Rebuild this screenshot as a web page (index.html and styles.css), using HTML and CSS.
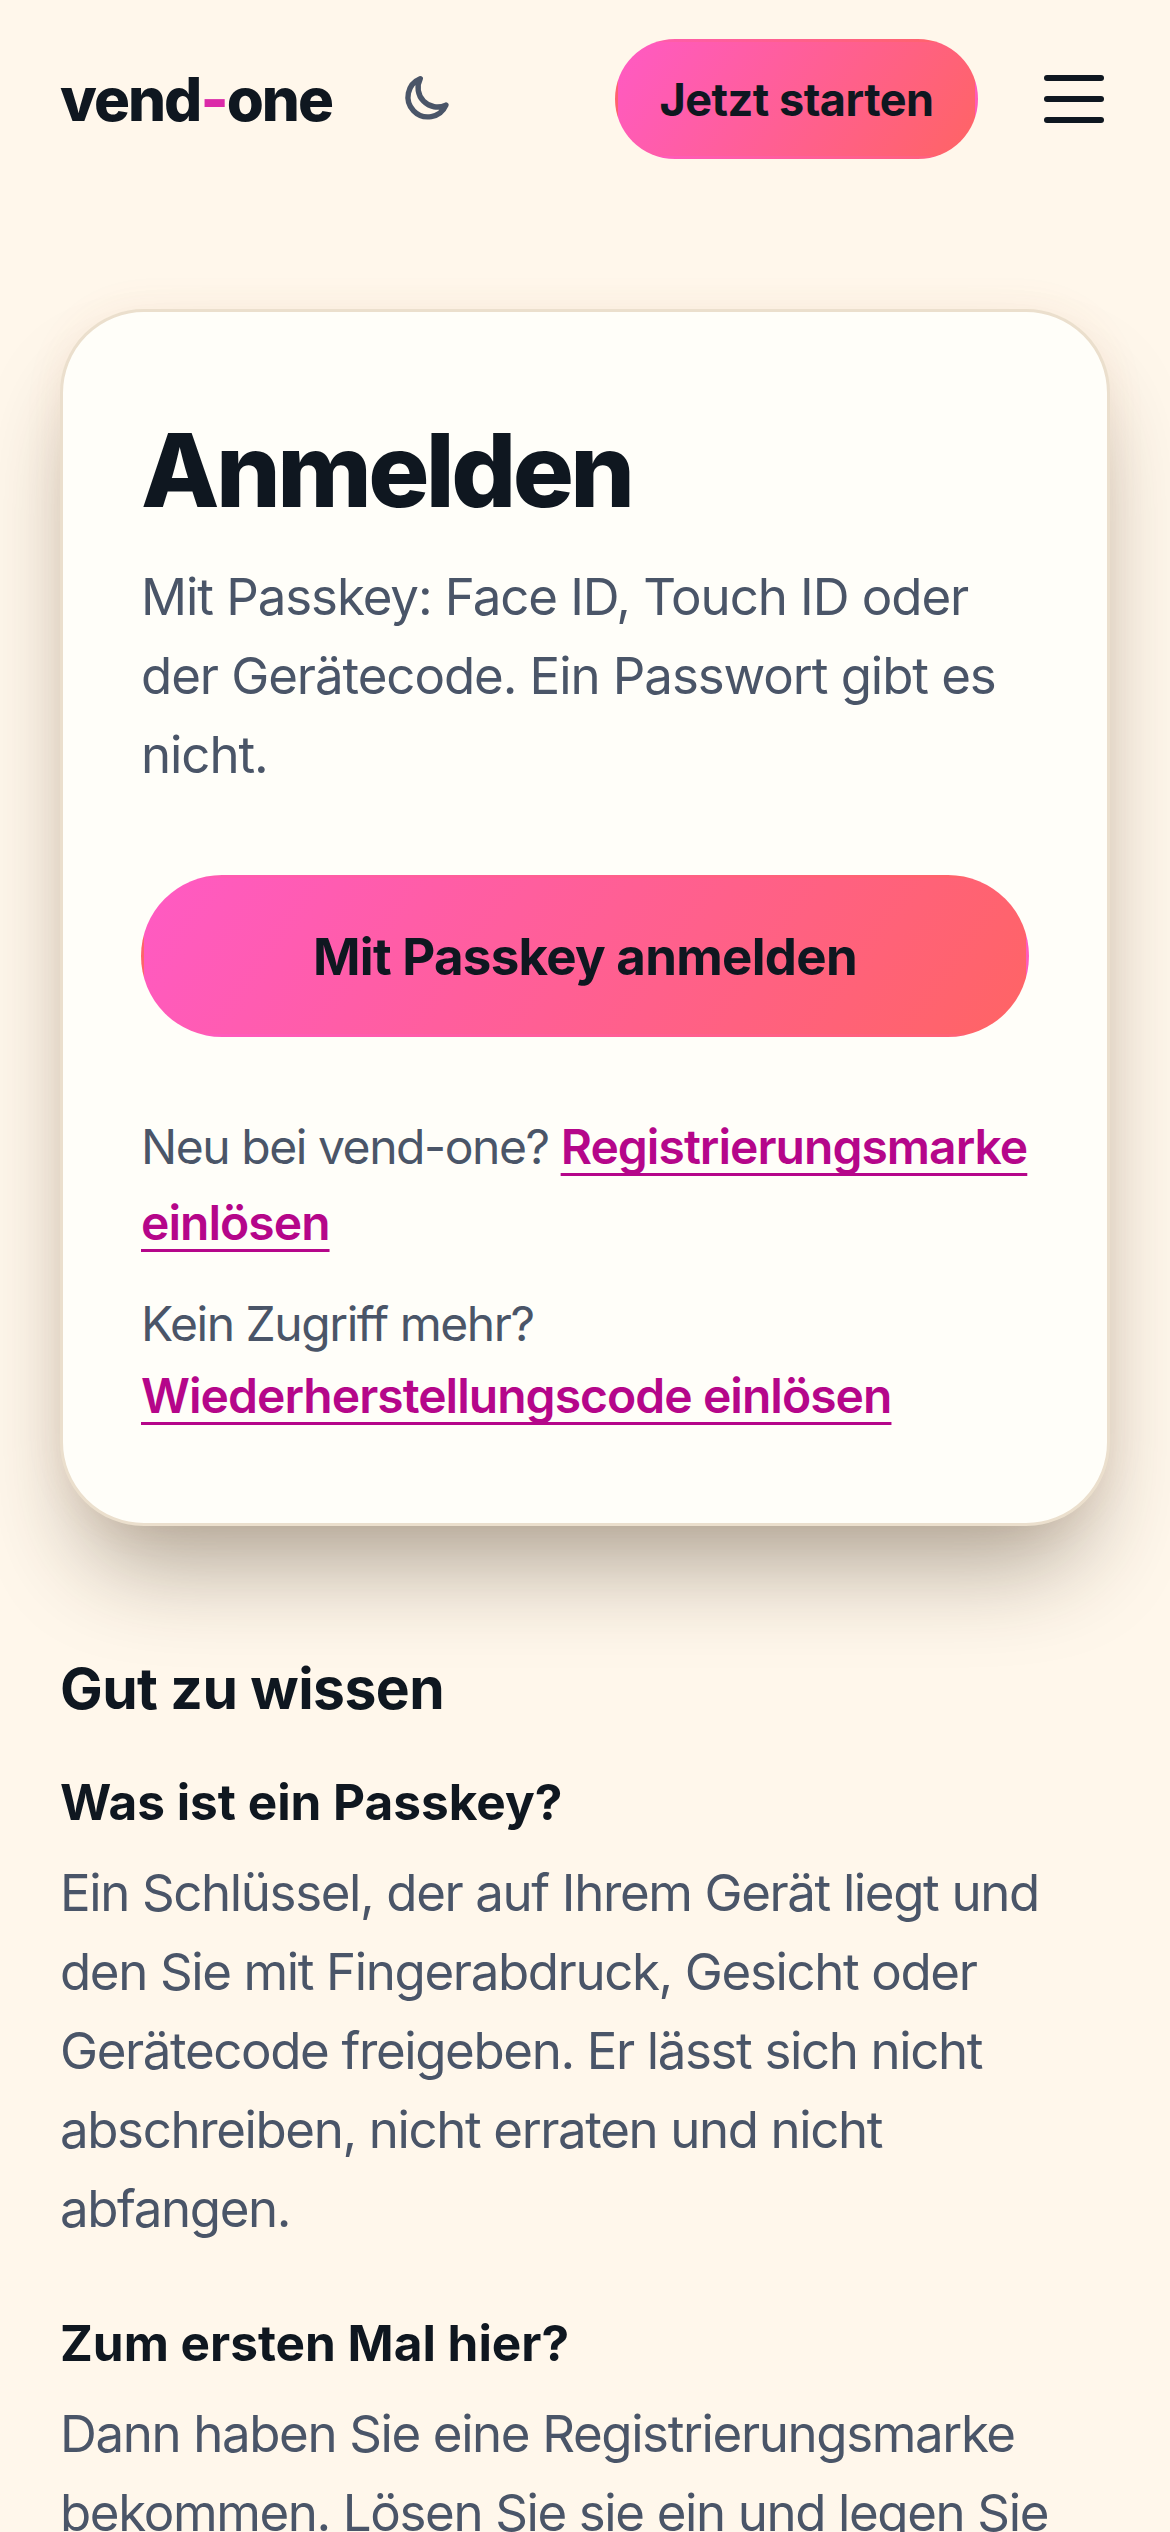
FILE: index.html
```html
<!DOCTYPE html>
<html lang="de">
<head>
  <title>Anmelden - vend-one</title>
  <link rel="stylesheet" href="styles.css">
</head>
<body>
  <header class="topbar">
    <a class="logo" href="#">vend<span class="logo-dash">-</span>one</a>
    <button class="theme-toggle" aria-label="Farbschema">
      <svg viewBox="0 0 24 24" width="54" height="54" fill="none" stroke="#4a5568" stroke-width="2.4" stroke-linecap="round" stroke-linejoin="round">
        <path d="M9 3A8.8 8.8 0 1 0 20.4 14.7A8.6 8.6 0 0 1 9 3z"/>
      </svg>
    </button>
    <a class="btn btn-small" href="#">Jetzt starten</a>
    <button class="menu-toggle" aria-label="Menü">
      <span></span><span></span><span></span>
    </button>
  </header>

  <main class="page">
    <section class="card">
      <h1>Anmelden</h1>
      <p class="lead">Mit Passkey: Face ID, Touch ID oder der Gerätecode. Ein Passwort gibt es nicht.</p>
      <a class="btn btn-large" href="#">Mit Passkey anmelden</a>
      <p class="note">Neu bei vend-one? <a href="#">Registrierungsmarke einlösen</a></p>
      <p class="note note-second">Kein Zugriff mehr?<br><a href="#">Wiederherstellungscode einlösen</a></p>
    </section>

    <section class="faq">
      <h2>Gut zu wissen</h2>
      <div class="faq-item">
        <h3>Was ist ein Passkey?</h3>
        <p>Ein Schlüssel, der auf Ihrem Gerät liegt und den Sie mit Fingerabdruck, Gesicht oder Gerätecode freigeben. Er lässt sich nicht abschreiben, nicht erraten und nicht abfangen.</p>
      </div>
      <div class="faq-item">
        <h3>Zum ersten Mal hier?</h3>
        <p>Dann haben Sie eine Registrierungsmarke bekommen. Lösen Sie sie ein und legen Sie</p>
      </div>
    </section>
  </main>
</body>
</html>
```

FILE: styles.css
```css
html {
  height: 100vh;
  overflow: hidden;
}

body {
  margin: 0;
  height: 100vh;
  overflow: hidden;
  background-color: #fff7eb;
  color: #0f1720;
  font-family: Inter, "Liberation Sans", sans-serif;
}

a {
  color: inherit;
  text-decoration: none;
}

button {
  padding: 0;
  border: 0;
  background: none;
  cursor: pointer;
}

.topbar {
  display: flex;
  align-items: center;
  height: 198px;
  padding: 0 66px 0 60px;
}

.logo {
  width: 340px;
  font-size: 60px;
  font-weight: 800;
  letter-spacing: -0.033em;
}

.logo-dash {
  color: #db2aa8;
}

.theme-toggle {
  display: flex;
}

.menu-toggle {
  display: flex;
  flex-direction: column;
  gap: 15px;
  width: 60px;
  margin-left: 66px;
}

.menu-toggle span {
  height: 6px;
  border-radius: 3px;
  background-color: #0f1720;
}

.btn {
  display: flex;
  align-items: center;
  justify-content: center;
  box-sizing: border-box;
  border: 3px solid transparent;
  border-radius: 999px;
  background: linear-gradient(125deg, #ff5ac4, #ff6464);
  font-weight: 700;
}

.btn-small {
  width: 363px;
  height: 120px;
  margin-left: auto;
  font-size: 45px;
  letter-spacing: -0.011em;
}

.btn-large {
  height: 162px;
  margin-top: 81px;
  font-size: 51px;
  letter-spacing: -0.014em;
}

.page {
  padding: 111px 60px 0;
}

.card {
  padding: 100px 78px 91px;
  border: 3px solid #ebdfcd;
  border-radius: 84px;
  background-color: #fffef9;
  box-shadow: 0 60px 96px -24px rgba(50, 35, 15, 0.4), 0 0 40px rgba(219, 100, 60, 0.07);
}

h1 {
  margin: 0;
  font-size: 102px;
  font-weight: 800;
  line-height: 1.15;
  letter-spacing: -0.035em;
}

.lead {
  margin: 28px 0 0;
  color: #4a5568;
  font-size: 51px;
  line-height: 79px;
  letter-spacing: -0.021em;
}

.note {
  margin: 72px 0 0;
  color: #4a5568;
  font-size: 48px;
  line-height: 76px;
  letter-spacing: -0.03em;
}

.note-second {
  margin-top: 27px;
  line-height: 72px;
}

.note a {
  color: #b5068a;
  font-weight: 600;
  letter-spacing: -0.02em;
  text-decoration: underline;
  text-underline-offset: 9px;
  text-decoration-thickness: 3px;
  text-decoration-skip-ink: none;
}

.faq {
  margin-top: 126px;
}

h2 {
  margin: 0;
  font-size: 57px;
  font-weight: 700;
  line-height: 74px;
  letter-spacing: -0.01em;
}

h3 {
  margin: 0;
  font-size: 49.5px;
  font-weight: 700;
  line-height: 64px;
}

.faq-item {
  margin-top: 44px;
}

.faq-item + .faq-item {
  margin-top: 63px;
}

.faq p {
  margin: 19px 0 0;
  color: #4a5568;
  font-size: 51px;
  line-height: 79px;
  letter-spacing: -0.027em;
}
```
